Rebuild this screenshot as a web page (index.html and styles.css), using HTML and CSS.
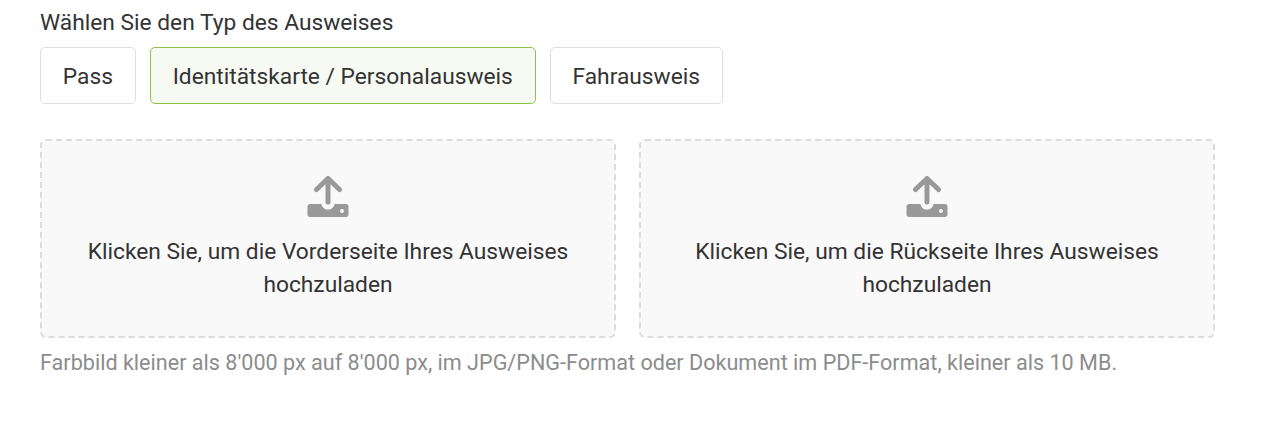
FILE: index.html
```html
<!DOCTYPE html>
<html lang="de">

<head>
    <meta charset="UTF-8">
    <title>Ausweis hochladen</title>
    <link rel="stylesheet" href="styles.css">
</head>

<body>

    <div class="id-form">
        <div class="type-label">Wählen Sie den Typ des Ausweises</div>
        <div class="type-list">
            <button class="type-btn">Pass</button>
            <button class="type-btn active">Identitätskarte / Personalausweis</button>
            <button class="type-btn">Fahrausweis</button>
        </div>

        <div class="upload-row">
            <div class="upload-box">
                <svg class="upload-icon" viewBox="0 0 42 42" width="42" height="42">
                    <path class="arrow" d="M21 26V3M9.500 13.500L21 2.500L32.500 13.500" />
                    <path class="tray" d="M3 28H14.500C15 31.500 17.500 33.500 21 33.500C24.500 33.500 27 31.500 27.500 28H39C40.500 28 41.500 29 41.500 30.500V38.500C41.500 40 40.500 41 39 41H3C1.500 41 0.500 40 0.500 38.500V30.500C0.500 29 1.500 28 3 28Z" />
                    <circle class="dot" cx="35" cy="35" r="2" />
                </svg>
                <div class="upload-text">Klicken Sie, um die Vorderseite Ihres Ausweises hochzuladen</div>
            </div>
            <div class="upload-box">
                <svg class="upload-icon" viewBox="0 0 42 42" width="42" height="42">
                    <path class="arrow" d="M21 26V3M9.500 13.500L21 2.500L32.500 13.500" />
                    <path class="tray" d="M3 28H14.500C15 31.500 17.500 33.500 21 33.500C24.500 33.500 27 31.500 27.500 28H39C40.500 28 41.500 29 41.500 30.500V38.500C41.500 40 40.500 41 39 41H3C1.500 41 0.500 40 0.500 38.500V30.500C0.500 29 1.500 28 3 28Z" />
                    <circle class="dot" cx="35" cy="35" r="2" />
                </svg>
                <div class="upload-text">Klicken Sie, um die Rückseite Ihres Ausweises hochzuladen</div>
            </div>
        </div>

        <div class="hint">Farbbild kleiner als 8'000 px auf 8'000 px, im JPG/PNG-Format oder Dokument im PDF-Format, kleiner als 10 MB.</div>
    </div>

</body>

</html>
```

FILE: styles.css
```css
html,
body {
    margin: 0;
    background: #fff;
}

body {
    font-family: Roboto, sans-serif;
    color: #333;
}

.id-form {
    width: 1175px;
    padding: 10px 0 0 40px;
}

.type-label {
    font-size: 22.75px;
    line-height: 26px;
    margin-bottom: 11px;
}

.type-list {
    display: flex;
    gap: 14px;
    margin-bottom: 35px;
}

.type-btn {
    height: 57px;
    padding: 1px 21.85px 0;
    font-family: inherit;
    font-size: 22.75px;
    color: #333;
    background: #fff;
    border: 1px solid #dedede;
    border-radius: 5px;
}

.type-btn.active {
    background: #f7faf3;
    border-color: #8bc34a;
}

.upload-row {
    display: flex;
    gap: 23px;
}

.upload-box {
    flex: 1;
    height: 199px;
    box-sizing: border-box;
    padding: 35px 40px 0;
    text-align: center;
    background: #f9f9f9;
    border: 2px dashed #dcdcdc;
    border-radius: 6px;
}

.upload-icon {
    display: block;
    margin: 0 auto 17px;
}

.arrow {
    fill: none;
    stroke: #999;
    stroke-width: 5;
    stroke-linecap: round;
    stroke-linejoin: round;
}

.tray {
    fill: #999;
}

.dot {
    fill: #f9f9f9;
}

.upload-text {
    font-size: 22.75px;
    line-height: 33px;
}

.hint {
    margin-top: 11px;
    font-size: 21.6px;
    line-height: 28px;
    color: #8c8c8c;
}
```
